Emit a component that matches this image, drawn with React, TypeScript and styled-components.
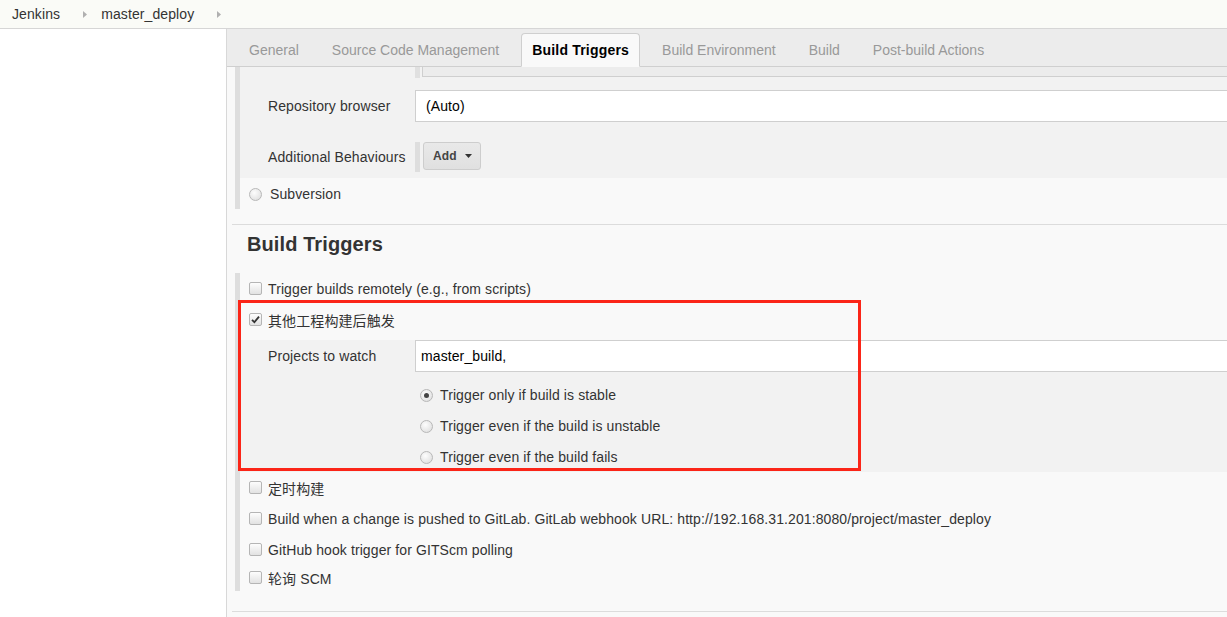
import React from "react";
import styled, { createGlobalStyle } from "styled-components";

const GlobalStyle = createGlobalStyle`
  html, body { margin: 0; padding: 0; }
  body {
    font-family: "Liberation Sans", Arial, "Noto Sans CJK SC", sans-serif;
    font-size: 14px;
    letter-spacing: 0.1px;
    color: #333;
    background: #fff;
    overflow: hidden;
  }
  * { box-sizing: border-box; }
`;

const Breadcrumbs = styled.div`
  height: 29px;
  background: #fafbf7;
  border-bottom: 1px solid #d6d6d6;
  display: flex;
  align-items: center;
  padding-left: 12px;
`;

const Crumb = styled.span`
  color: #333;
  font-size: 14px;
  line-height: 16px;
`;

const CrumbArrow = styled.span`
  display: inline-flex;
  align-items: center;
  margin: 0 14px 0 23px;
  color: #aaa;
`;

const Body = styled.div`
  display: flex;
  height: calc(100vh - 29px);
`;

const Sidebar = styled.div`
  width: 227px;
  flex: none;
  background: #fff;
  border-right: 1px solid #d8d8d8;
`;

const Main = styled.div`
  flex: 1;
  min-width: 0;
  background: #f9f9f9;
  overflow: hidden;
`;

const TabBar = styled.div`
  height: 38px;
  background: #ececec;
  border-bottom: 1px solid #cfcfcf;
  display: flex;
  align-items: flex-end;
  gap: 11px;
  padding-left: 11px;
`;

const Tab = styled.div<{ $active?: boolean }>`
  height: 34px;
  margin-bottom: -1px;
  padding: 0 10px 1px;
  display: flex;
  align-items: center;
  font-size: 14px;
  border: 1px solid ${(p) => (p.$active ? "#cfcfcf" : "transparent")};
  border-bottom-color: ${(p) => (p.$active ? "#f9f9f9" : "transparent")};
  border-radius: 4px 4px 0 0;
  background: ${(p) => (p.$active ? "#f9f9f9" : "transparent")};
  color: ${(p) => (p.$active ? "#000" : "#999")};
  font-weight: ${(p) => (p.$active ? "bold" : "normal")};
  letter-spacing: ${(p) => (p.$active ? "0.2px" : "0")};
`;

const Content = styled.div`
  position: relative;
  padding-left: 5px;
`;

const Section = styled.div`
  margin-left: 3px;
  border-left: 5px solid #dedede;
`;

const Nested = styled.div<{ $bottom: number }>`
  background: #f2f2f2;
  padding-bottom: ${(p) => p.$bottom}px;
`;

const Stub = styled.div`
  display: flex;
  height: 11px;
  padding-left: 175px;
`;

const StubBar = styled.div`
  width: 5px;
  background: #e0e0e0;
  margin-right: 2px;
`;

const StubBox = styled.div`
  flex: 1;
  height: 10px;
  background: #ececec;
  border-left: 1px solid #cfcfcf;
  border-bottom: 1px solid #cfcfcf;
`;

const FieldRow = styled.div<{ $top: number }>`
  display: flex;
  align-items: center;
  margin-top: ${(p) => p.$top}px;
`;

const Label = styled.div`
  width: 175px;
  flex: none;
  padding-left: 28px;
  color: #333;
  font-size: 14px;
`;

const TextField = styled.div<{ $pad: number }>`
  flex: 1;
  margin-right: -20px;
  height: 32px;
  background: #fff;
  border: 1px solid #cfcfcf;
  display: flex;
  align-items: center;
  padding-left: ${(p) => p.$pad}px;
  color: #000;
  font-size: 14px;
`;

const ButtonGroup = styled.div`
  display: flex;
  align-items: stretch;
  height: 30px;
`;

const GroupBar = styled.div`
  width: 5px;
  background: #dedede;
  margin-right: 3px;
`;

const AddButton = styled.div`
  width: 58px;
  height: 28px;
  align-self: flex-start;
  border: 1px solid #cdcdcd;
  border-radius: 3px;
  background: linear-gradient(#e9e9e9, #e0e0e0);
  display: flex;
  align-items: center;
  padding-left: 9px;
  gap: 8px;
  font-size: 12px;
  font-weight: bold;
  color: #444;
`;

const OptionRow = styled.div<{ $h?: number }>`
  height: ${(p) => p.$h ?? 31}px;
  display: flex;
  align-items: center;
  padding-left: 9px;
  gap: 6px;
  color: #333;
  font-size: 14px;
  white-space: nowrap;
`;

const RadioList = styled.div`
  padding-left: 180px;
  margin-top: 7px;
`;

const RadioRow = styled.div`
  height: 31px;
  display: flex;
  align-items: center;
  gap: 7px;
  color: #333;
  font-size: 14px;
`;

const Box = styled.span`
  width: 13px;
  height: 13px;
  flex: none;
  border: 1px solid #b5b5b5;
  border-radius: 2px;
  background: linear-gradient(#fdfdfd, #e2e2e2);
  display: inline-flex;
  align-items: center;
  justify-content: center;
  margin-top: -1px;
`;

const Circle = styled.span`
  width: 13px;
  height: 13px;
  flex: none;
  border: 1px solid #b8b8b8;
  border-radius: 50%;
  background: radial-gradient(circle at 40% 35%, #fdfdfd, #dadada);
  display: inline-flex;
  align-items: center;
  justify-content: center;
  margin-top: 2px;
`;

const Dot = styled.span`
  width: 5px;
  height: 5px;
  border-radius: 50%;
  background: #444;
`;

const Separator = styled.div<{ $top: number }>`
  height: 1px;
  background: #dcdcdc;
  margin-top: ${(p) => p.$top}px;
`;

const Heading = styled.h2`
  margin: 0;
  padding: 7px 0 0 15px;
  height: 48px;
  font-size: 20px;
  line-height: 24px;
  font-weight: bold;
  color: #333;
`;

const Highlight = styled.div`
  position: absolute;
  left: 11px;
  top: 233px;
  width: 623px;
  height: 171px;
  border: 3px solid #fb2518;
  pointer-events: none;
`;

const Arrow = () => (
  <svg width="4" height="7" viewBox="0 0 4 7">
    <path d="M0 0 L4 3.5 L0 7 Z" fill="#b0b0b0" />
  </svg>
);

const Caret = () => (
  <svg width="7" height="4" viewBox="0 0 7 4">
    <path d="M0 0 H7 L3.5 4 Z" fill="#333" />
  </svg>
);

const Checkbox = ({ checked }: { checked?: boolean }) => (
  <Box>
    {checked && (
      <svg width="9" height="9" viewBox="0 0 9 9">
        <path d="M1 4.8 L3.4 7.2 L8 1.6" stroke="#333" strokeWidth="1.8" fill="none" />
      </svg>
    )}
  </Box>
);

const Radio = ({ checked }: { checked?: boolean }) => <Circle>{checked && <Dot />}</Circle>;

const tabs = [
  "General",
  "Source Code Management",
  "Build Triggers",
  "Build Environment",
  "Build",
  "Post-build Actions",
];

export default function App() {
  return (
    <>
      <GlobalStyle />
      <Breadcrumbs>
        <Crumb>Jenkins</Crumb>
        <CrumbArrow>
          <Arrow />
        </CrumbArrow>
        <Crumb>master_deploy</Crumb>
        <CrumbArrow>
          <Arrow />
        </CrumbArrow>
      </Breadcrumbs>
      <Body>
        <Sidebar />
        <Main>
          <TabBar>
            {tabs.map((t) => (
              <Tab key={t} $active={t === "Build Triggers"}>
                {t}
              </Tab>
            ))}
          </TabBar>
          <Content>
            <Section>
              <Nested $bottom={6}>
                <Stub>
                  <StubBar />
                  <StubBox />
                </Stub>
                <FieldRow $top={12}>
                  <Label>Repository browser</Label>
                  <TextField $pad={10}>(Auto)</TextField>
                </FieldRow>
                <FieldRow $top={20}>
                  <Label>Additional Behaviours</Label>
                  <ButtonGroup>
                    <GroupBar />
                    <AddButton>
                      Add <Caret />
                    </AddButton>
                  </ButtonGroup>
                </FieldRow>
              </Nested>
              <OptionRow $h={31}>
                <Radio />
                <span style={{ marginLeft: 2 }}>Subversion</span>
              </OptionRow>
            </Section>
            <Separator $top={15} />
            <Heading>Build Triggers</Heading>
            <Section>
              <OptionRow>
                <Checkbox />
                Trigger builds remotely (e.g., from scripts)
              </OptionRow>
              <OptionRow>
                <Checkbox checked />
                其他工程构建后触发
              </OptionRow>
              <Nested $bottom={0}>
                <FieldRow $top={5}>
                  <Label>Projects to watch</Label>
                  <TextField $pad={5}>master_build,</TextField>
                </FieldRow>
                <RadioList>
                  <RadioRow>
                    <Radio checked />
                    Trigger only if build is stable
                  </RadioRow>
                  <RadioRow>
                    <Radio />
                    Trigger even if the build is unstable
                  </RadioRow>
                  <RadioRow>
                    <Radio />
                    Trigger even if the build fails
                  </RadioRow>
                </RadioList>
              </Nested>
              <OptionRow>
                <Checkbox />
                定时构建
              </OptionRow>
              <OptionRow>
                <Checkbox />
                Build when a change is pushed to GitLab. GitLab webhook URL: http://192.168.31.201:8080/project/master_deploy
              </OptionRow>
              <OptionRow>
                <Checkbox />
                GitHub hook trigger for GITScm polling
              </OptionRow>
              <OptionRow $h={26}>
                <Checkbox />
                轮询 SCM
              </OptionRow>
            </Section>
            <Separator $top={20} />
            <Highlight />
          </Content>
        </Main>
      </Body>
    </>
  );
}
